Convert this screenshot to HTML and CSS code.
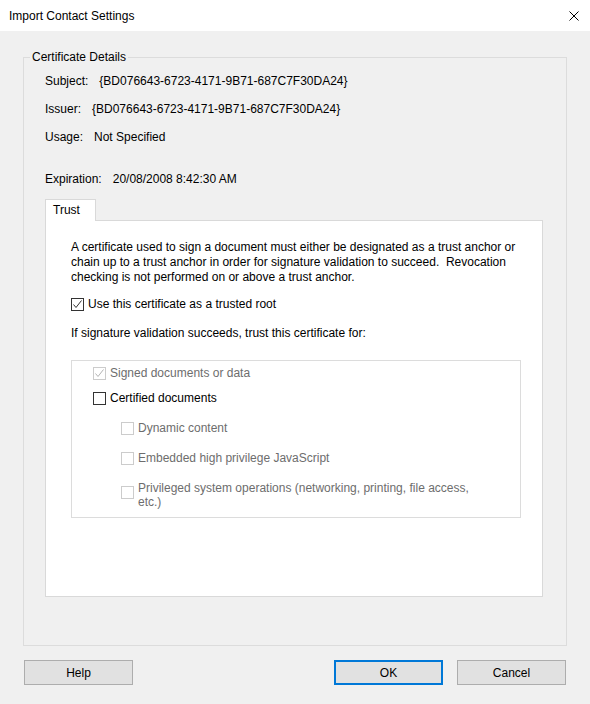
FILE: index.html
```html
<!DOCTYPE html>
<html lang="en">
<head>
    <meta charset="utf-8">
    <title>Import Contact Settings</title>
    <link rel="stylesheet" href="styles.css">
</head>
<body>
    <div class="titlebar">
        <span class="title">Import Contact Settings</span>
        <svg class="close" viewBox="0 0 10 10" width="10" height="10">
            <path d="M0.5 0.5L9.5 9.5M9.5 0.5L0.5 9.5" stroke="#000" stroke-width="1" fill="none"/>
        </svg>
    </div>

    <fieldset class="details">
        <legend>Certificate Details</legend>
        <div class="details-body">
            <div class="info-row"><span class="info-label">Subject:</span>{BD076643-6723-4171-9B71-687C7F30DA24}</div>
            <div class="info-row"><span class="info-label">Issuer:</span>{BD076643-6723-4171-9B71-687C7F30DA24}</div>
            <div class="info-row"><span class="info-label">Usage:</span>Not Specified</div>
            <div class="info-row expiration"><span class="info-label">Expiration:</span>20/08/2008 8:42:30 AM</div>

            <div class="tab">Trust</div>
            <div class="tab-panel">
                <p class="intro">A certificate used to sign a document must either be designated as a trust anchor or chain up to a trust anchor in order for signature validation to succeed.&nbsp; Revocation checking is not performed on or above a trust anchor.</p>

                <label class="check-row trusted-root">
                    <span class="box checked">
                        <svg viewBox="0 0 11 11" width="11" height="11"><path d="M1.5 5.5L4 8.5L9.5 1.5" stroke="#333" stroke-width="1" fill="none"/></svg>
                    </span>
                    Use this certificate as a trusted root
                </label>

                <p class="trust-for">If signature validation succeeds, trust this certificate for:</p>

                <div class="options">
                    <label class="check-row disabled">
                        <span class="box checked">
                            <svg viewBox="0 0 11 11" width="11" height="11"><path d="M1.5 5.5L4 8.5L9.5 1.5" stroke="#b4b4b4" stroke-width="1" fill="none"/></svg>
                        </span>
                        Signed documents or data
                    </label>
                    <label class="check-row certified">
                        <span class="box"></span>
                        Certified documents
                    </label>
                    <label class="check-row sub disabled">
                        <span class="box"></span>
                        Dynamic content
                    </label>
                    <label class="check-row sub disabled">
                        <span class="box"></span>
                        Embedded high privilege JavaScript
                    </label>
                    <label class="check-row sub disabled multiline">
                        <span class="box"></span>
                        <span class="wrap-text">Privileged system operations (networking, printing, file access, etc.)</span>
                    </label>
                </div>
            </div>
        </div>
    </fieldset>

    <div class="button-row">
        <button class="btn">Help</button>
        <span class="spacer"></span>
        <button class="btn default">OK</button>
        <button class="btn">Cancel</button>
    </div>
</body>
</html>
```

FILE: styles.css
```css
* {
    margin: 0;
    padding: 0;
    box-sizing: border-box;
}

body {
    font-family: "Liberation Sans", Arial, sans-serif;
    font-size: 12px;
    color: #000;
    background-color: #f0f0f0;
    height: 704px;
    overflow: hidden;
}

.titlebar {
    height: 31px;
    background: white;
    display: flex;
    align-items: center;
    justify-content: space-between;
    padding: 0 11px 0 9px;
}

.title {
    font-size: 12px;
}

.close {
    display: block;
}

.details {
    margin: 19px 23px 0 23px;
    border: 1px solid #dcdcdc;
    padding: 0;
    height: 596px;
}

.details legend {
    margin-left: 6px;
    padding: 0 2px;
    line-height: 15px;
}

.details-body {
    padding: 9px 0 0 21px;
}

.info-row {
    line-height: 15px;
    margin-bottom: 13px;
}

.info-row.expiration {
    margin-top: 27px;
    margin-bottom: 12px;
}

.info-label {
    margin-right: 11px;
}

.tab {
    position: relative;
    z-index: 1;
    width: 51px;
    height: 22px;
    margin-bottom: -1px;
    padding-left: 7px;
    line-height: 20px;
    background: white;
    border: 1px solid #d9d9d9;
    border-bottom: none;
}

.tab-panel {
    width: 498px;
    height: 377px;
    background: white;
    border: 1px solid #d9d9d9;
    padding: 19px 25px 0 25px;
}

.intro {
    line-height: 15px;
    width: 450px;
}

.check-row {
    display: flex;
    align-items: center;
    gap: 4px;
    line-height: 15px;
}

.box {
    width: 13px;
    height: 13px;
    flex-shrink: 0;
    border: 1px solid #333;
    background: white;
    display: flex;
    align-items: center;
    justify-content: center;
}

.box svg {
    display: block;
}

.trusted-root {
    margin-top: 12px;
}

.trust-for {
    margin-top: 14px;
    line-height: 15px;
}

.options {
    margin-top: 19px;
    width: 450px;
    border: 1px solid #dcdcdc;
    padding: 5px 0 8px 21px;
}

.check-row.disabled {
    color: #6d6d6d;
}

.check-row.disabled .box {
    border-color: #cccccc;
}

.certified {
    margin-top: 10px;
}

.check-row.sub {
    margin-left: 28px;
    margin-top: 15px;
}

.multiline {
    align-items: flex-start;
    line-height: 14px;
}

.multiline .box {
    margin-top: 5px;
}

.wrap-text {
    width: 340px;
}

.button-row {
    display: flex;
    gap: 14px;
    padding: 14px 24px 0 24px;
}

.spacer {
    flex: 1;
}

.btn {
    width: 109px;
    height: 25px;
    font-family: inherit;
    font-size: 12px;
    color: #000;
    background: #e1e1e1;
    border: 1px solid #adadad;
}

.btn.default {
    border: 2px solid #0078d7;
}
```
